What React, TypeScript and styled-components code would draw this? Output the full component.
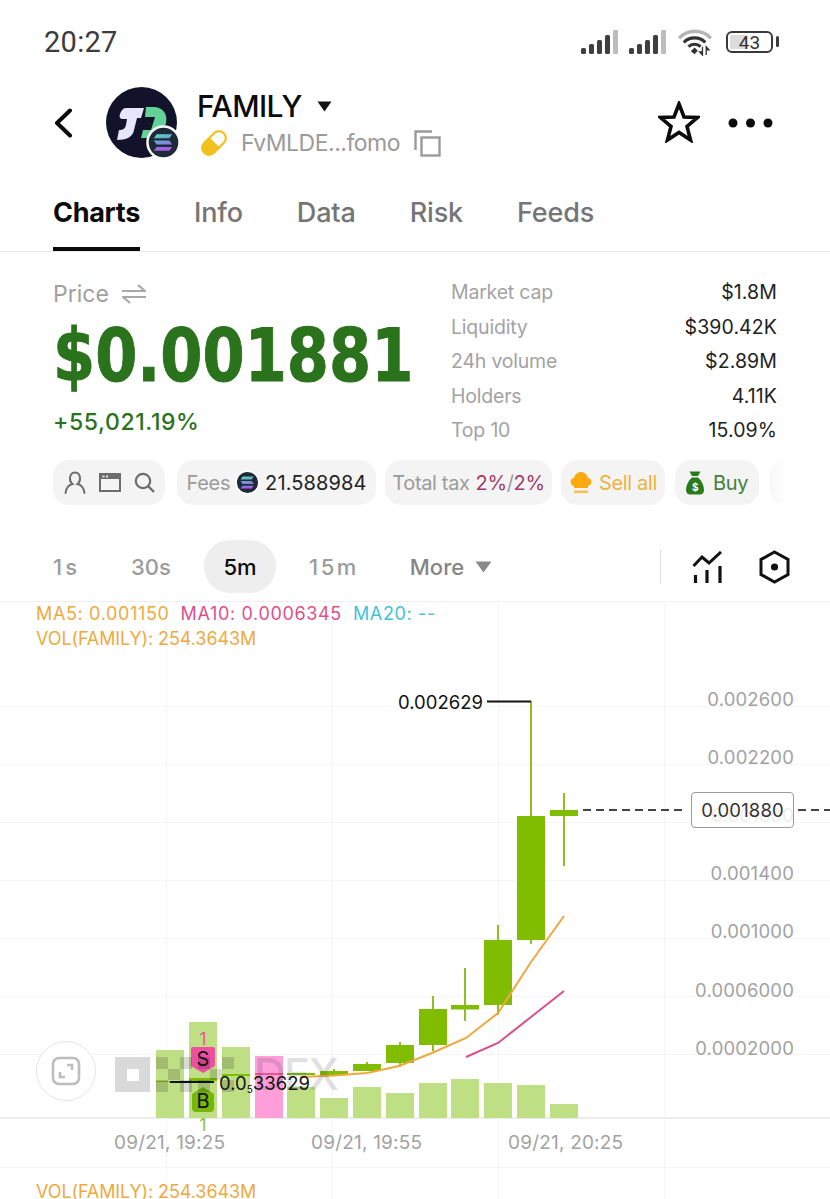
import React from "react";
import styled, { createGlobalStyle } from "styled-components";

const Global = createGlobalStyle`
  html, body { margin: 0; padding: 0; background: #fff; }
  body {
    font-family: Inter, "Liberation Sans", sans-serif;
    font-feature-settings: "tnum" 1;
  }
`;

const Page = styled.div`
  width: 830px;
  height: 1199px;
  overflow: hidden;
  display: flex;
  flex-direction: column;
  background: #fff;
`;

const StatusBar = styled.div`
  height: 84px;
  flex: none;
  display: flex;
  align-items: center;
  justify-content: space-between;
  padding: 0 57px 0 44px;
`;
const Clock = styled.span`
  font: 400 29px Roboto, sans-serif;
  color: #3c3c3c;
  letter-spacing: 0.3px;
`;
const StatusIcons = styled.div`
  display: flex;
  align-items: center;
  gap: 9px;
`;
const SignalIcons = styled.div`
  display: flex;
  gap: 9px;
  margin-right: -1px;
`;
const BatteryBox = styled.div`
  position: relative;
  width: 47px;
  height: 22px;
  margin-left: 3px;
  box-sizing: border-box;
  border: 2px solid #3a3a3a;
  border-radius: 6px;
  display: flex;
  align-items: center;
  justify-content: center;
  font: 400 19px Roboto, sans-serif;
  color: #333;
  background: linear-gradient(90deg, #dcdcdc 0 42%, #fff 42%);
  background-clip: content-box;
  padding: 2px;
  &::after {
    content: "";
    position: absolute;
    right: -8px;
    top: 3px;
    width: 3px;
    height: 11px;
    border-radius: 2px;
    background: #3a3a3a;
  }
`;

const Header = styled.div`
  height: 106px;
  flex: none;
  display: flex;
  align-items: flex-start;
  padding-top: 3px;
  box-sizing: border-box;
  position: relative;
`;
const BackSlot = styled.div`
  width: 106px;
  padding: 21px 0 0 53px;
  box-sizing: border-box;
  flex: none;
`;
const AvatarSlot = styled.div`
  position: relative;
  width: 71px;
  height: 71px;
  flex: none;
`;
const ChainBadge = styled.div`
  position: absolute;
  right: -4px;
  bottom: -2px;
  width: 35px;
  height: 35px;
  display: flex;
`;
const TitleBlock = styled.div`
  margin-left: 20px;
  flex: 1;
  display: flex;
  flex-direction: column;
`;
const TitleRow = styled.div`
  display: flex;
  align-items: center;
  gap: 15px;
  height: 38px;
`;
const Title = styled.span`
  font: 500 30px Inter, sans-serif;
  color: #0b0b0b;
  letter-spacing: -0.55px;
`;
const AddressRow = styled.div`
  display: flex;
  align-items: center;
  height: 36px;
  margin-left: 3px;
`;
const Address = styled.span`
  font: 400 23px Inter, sans-serif;
  color: #9a9a9a;
  margin-left: 13px;
  letter-spacing: -0.5px;
`;
const HeadActions = styled.div`
  display: flex;
  align-items: center;
  gap: 28px;
  padding: 14px 57px 0 0;
`;

const Tabs = styled.div`
  height: 62px;
  flex: none;
  display: flex;
  box-sizing: border-box;
  border-bottom: 1px solid #e9e9e9;
  padding-left: 53px;
  gap: 54px;
`;
const Tab = styled.div<{ $on?: boolean }>`
  height: 61px;
  box-sizing: border-box;
  padding-top: 5px;
  font: ${(p) => (p.$on ? 700 : 500)} 27px Inter, sans-serif;
  letter-spacing: ${(p) => (p.$on ? -0.3 : -0.15)}px;
  color: ${(p) => (p.$on ? "#0b0b0b" : "#757575")};
  line-height: 36px;
  border-bottom: 4px solid ${(p) => (p.$on ? "#0b0b0b" : "transparent")};
`;

const PriceSection = styled.div`
  height: 208px;
  flex: none;
  box-sizing: border-box;
  display: flex;
  padding: 23px 53px 0;
`;
const PriceCol = styled.div`
  width: 398px;
  flex: none;
  display: flex;
  flex-direction: column;
`;
const PriceLabelRow = styled.div`
  display: flex;
  align-items: center;
  gap: 13px;
  height: 37px;
  font: 400 23px Inter, sans-serif;
  color: #a0a0a0;
`;
const BigPrice = styled.div`
  font: 700 73px "DejaVu Sans", sans-serif;
  line-height: 88px;
  height: 88px;
  color: #2a721c;
  -webkit-text-stroke: 1px #2a721c;
  transform: scaleX(0.83);
  transform-origin: left center;
  white-space: nowrap;
`;
const Change = styled.div`
  font: 500 23px Inter, sans-serif;
  line-height: 44px;
  color: #2a721c;
  letter-spacing: 0.6px;
`;
const Stats = styled.div`
  flex: 1;
  display: flex;
  flex-direction: column;
`;
const StatRow = styled.div`
  height: 34.5px;
  display: flex;
  align-items: center;
  justify-content: space-between;
  font: 400 19.5px Inter, sans-serif;
  letter-spacing: -0.2px;
`;
const StatLabel = styled.span`
  color: #a3a3a3;
`;
const StatValue = styled.span`
  color: #222;
  letter-spacing: 0.1px;
`;

const PillRow = styled.div`
  height: 45px;
  flex: none;
  display: flex;
  padding-left: 53px;
`;
const Pill = styled.div<{ $w: number; $ml: number; $gap?: number; $fade?: boolean }>`
  width: ${(p) => p.$w}px;
  margin-left: ${(p) => p.$ml}px;
  flex: none;
  box-sizing: border-box;
  height: 45px;
  border-radius: 16px;
  background: ${(p) => (p.$fade ? "linear-gradient(90deg,#f7f7f7,#fff 30%)" : "#f4f4f4")};
  display: flex;
  align-items: center;
  justify-content: center;
  gap: ${(p) => p.$gap ?? 6}px;
  font: 400 20px Inter, sans-serif;
  letter-spacing: -0.35px;
  white-space: nowrap;
`;
const PillText = styled.span<{ $c: string; $ls?: number }>`
  color: ${(p) => p.$c};
  letter-spacing: ${(p) => p.$ls ?? -0.35}px;
`;

const IntervalRow = styled.div`
  margin-top: 35px;
  height: 53px;
  flex: none;
  display: flex;
  align-items: center;
  position: relative;
`;
const Interval = styled.div<{ $on?: boolean; $w: number; $ml: number; $ls?: number }>`
  width: ${(p) => p.$w}px;
  margin-left: ${(p) => p.$ml}px;
  height: 53px;
  flex: none;
  display: flex;
  align-items: center;
  justify-content: center;
  gap: 11px;
  border-radius: 26px;
  font: 500 22px Inter, sans-serif;
  letter-spacing: ${(p) => p.$ls ?? 0}px;
  color: ${(p) => (p.$on ? "#0b0b0b" : "#9b9b9b")};
  background: ${(p) => (p.$on ? "#eeeeee" : "transparent")};
`;
const MoreText = styled.span`
  color: #858585;
`;
const IntervalTools = styled.div`
  margin-left: auto;
  height: 34px;
  display: flex;
  align-items: center;
  border-left: 1px solid #dedede;
  padding: 0 40px 0 31px;
  gap: 36px;
`;

const Chart = styled.div`
  margin-top: 8px;
  flex: 1;
  position: relative;
  overflow: hidden;
`;
const ChartSvg = styled.svg`
  position: absolute;
  inset: 0;
  width: 830px;
  height: 598px;
`;
const Legend = styled.div`
  position: absolute;
  left: 36px;
  top: 0;
  font: 400 18px Inter, sans-serif;
  letter-spacing: -0.1px;
  color: #efa93f;
  line-height: 25px;
`;
const LegendLine = styled.div`
  letter-spacing: 0.65px;
`;
const LegendPart = styled.span<{ $c: string; $m?: number }>`
  color: ${(p) => p.$c};
  margin-left: ${(p) => p.$m ?? 0}px;
`;
const AxisLabel = styled.div<{ $x: number; $y: number; $ghost?: boolean }>`
  position: absolute;
  right: ${(p) => 830 - p.$x}px;
  top: ${(p) => p.$y - 601 - 12}px;
  font: 400 18.5px Inter, sans-serif;
  letter-spacing: 0.15px;
  line-height: 24px;
  color: ${(p) => (p.$ghost ? "#d8d8d8" : "#a2a2a2")};
  white-space: nowrap;
`;
const DateLabel = styled.div<{ $x: number }>`
  position: absolute;
  left: ${(p) => p.$x}px;
  top: ${1143 - 601 - 12}px;
  font: 400 19px Inter, sans-serif;
  letter-spacing: 0.2px;
  line-height: 24px;
  color: #a2a2a2;
  white-space: nowrap;
`;
const PriceBox = styled.div`
  position: absolute;
  left: 691px;
  top: ${792 - 601}px;
  width: 103px;
  height: 36px;
  box-sizing: border-box;
  border: 1px solid #9a9a9a;
  border-radius: 4px;
  background: rgba(255, 255, 255, 0.55);
  display: flex;
  align-items: center;
  justify-content: center;
  font: 400 18.5px Inter, sans-serif;
  letter-spacing: 0.15px;
  color: #333;
`;
const Callout = styled.div<{ $x: number; $y: number }>`
  position: absolute;
  left: ${(p) => p.$x}px;
  top: ${(p) => p.$y - 601 - 12}px;
  font: 400 18.5px Inter, sans-serif;
  line-height: 24px;
  color: #111;
  white-space: nowrap;
`;
const Sub = styled.span`
  font-size: 10px;
  vertical-align: -3px;
`;
const Marker = styled.div<{ $x: number; $y: number; $c: string; $size: number }>`
  position: absolute;
  left: ${(p) => p.$x}px;
  top: ${(p) => p.$y - 601}px;
  font: 400 ${(p) => p.$size}px Inter, sans-serif;
  line-height: 20px;
  width: 24px;
  text-align: center;
  color: ${(p) => p.$c};
`;
const Watermark = styled.div`
  position: absolute;
  left: 254px;
  top: ${1051 - 601}px;
  font: 500 44px Inter, sans-serif;
  line-height: 46px;
  color: rgba(60, 60, 70, 0.16);
  letter-spacing: -2px;
`;
const ExpandButton = styled.div`
  position: absolute;
  left: 36px;
  top: ${1041 - 601}px;
  width: 60px;
  height: 60px;
  box-sizing: border-box;
  border: 1px solid #e4e4e4;
  border-radius: 50%;
  background: #fff;
  display: flex;
  align-items: center;
  justify-content: center;
`;
const BottomLegend = styled.div`
  position: absolute;
  left: 36px;
  top: ${1179 - 601}px;
  font: 400 18px Inter, sans-serif;
  letter-spacing: -0.1px;
  line-height: 25px;
  color: #efa93f;
`;

const Solana = ({ id, size }: { id: string; size: number }) => (
  <svg width={size} height={size} viewBox="0 0 36 36">
    <defs>
      <linearGradient id={id} x1="0" y1="0" x2="0.3" y2="1">
        <stop offset="0" stopColor="#4fe3b8" />
        <stop offset="0.5" stopColor="#6f9bd8" />
        <stop offset="1" stopColor="#a45ce6" />
      </linearGradient>
    </defs>
    <circle cx="18" cy="18" r="16.5" fill="#1e2a38" stroke="#fff" strokeWidth="2.5" />
    <path d="M11 9.5h16l-3 4H8zM8 16h16l3 4H11zM11 22.5h16l-3 4H8z" fill={`url(#${id})`} />
  </svg>
);

const Signal = () => (
  <svg width="39" height="24" viewBox="0 0 39 24">
    <rect x="0" y="18" width="5" height="6" rx="1.5" fill="#3f3f3f" />
    <rect x="8" y="14" width="5" height="10" rx="1.5" fill="#3f3f3f" />
    <rect x="16" y="10" width="5" height="14" rx="1.5" fill="#3f3f3f" />
    <rect x="24" y="5" width="5" height="19" rx="1.5" fill="#3f3f3f" />
    <rect x="32" y="0" width="5" height="24" rx="1" fill="#bdbdbd" />
  </svg>
);

const volumes: [number, number, string][] = [
  [156, 1050, "#bfdf84"],
  [189, 1022, "#bfdf84"],
  [222, 1047, "#bfdf84"],
  [255, 1056, "#ff9ed8"],
  [287, 1087, "#bfdf84"],
  [320, 1098, "#bfdf84"],
  [353, 1087, "#bfdf84"],
  [386, 1093, "#bfdf84"],
  [419, 1083, "#bfdf84"],
  [451, 1079, "#bfdf84"],
  [484, 1083, "#bfdf84"],
  [517, 1085, "#bfdf84"],
  [550, 1104, "#bfdf84"],
];
// x, bodyTop, bodyBottom
const candles: [number, number, number][] = [
  [156, 1081, 1082],
  [189, 1078, 1081],
  [222, 1074, 1076],
  [287, 1073, 1075],
  [320, 1071, 1075],
  [353, 1064, 1071],
  [386, 1045, 1063],
  [419, 1009, 1045],
  [451, 1005, 1009.5],
  [484, 940, 1005],
  [517, 816, 940],
  [550, 810, 816],
];
const hLines = [706, 764, 822, 880, 938, 996, 1054, 1167];
const vLines = [166, 332, 498, 664];
const axis: [number, string][] = [
  [699, "0.002600"],
  [757, "0.002200"],
  [873, "0.001400"],
  [931, "0.001000"],
  [990, "0.0006000"],
  [1048, "0.0002000"],
];
const stats: [string, string][] = [
  ["Market cap", "$1.8M"],
  ["Liquidity", "$390.42K"],
  ["24h volume", "$2.89M"],
  ["Holders", "4.11K"],
  ["Top 10", "15.09%"],
];

export default function App() {
  return (
    <Page>
      <Global />
      <StatusBar>
        <Clock>20:27</Clock>
        <StatusIcons>
          <SignalIcons>
            <Signal />
            <Signal />
          </SignalIcons>
          <svg width="38" height="28" viewBox="0 0 38 30">
            <path d="M2 11 C11 1 27 1 36 11" fill="none" stroke="#b5b5b5" strokeWidth="3.6" />
            <path d="M7 15.5 C13 9 24 9 30 15.5" fill="none" stroke="#333" strokeWidth="3.4" />
            <path d="M12 20 C15.5 16.5 21.5 16.5 25 20" fill="none" stroke="#333" strokeWidth="3.2" />
            <path d="M14.5 25 L18.5 21 L22 24.5 L18.5 28 Z" fill="#333" />
            <path d="M27 20v9l-3-3.5h3M31 29v-9l3 3.5h-3" fill="#333" stroke="#333" strokeWidth="1.4" />
          </svg>
          <BatteryBox>43</BatteryBox>
        </StatusIcons>
      </StatusBar>

      <Header>
        <BackSlot>
          <svg width="20" height="30" viewBox="0 0 20 30">
            <path d="M17 2.5 L4 15 L17 27.5" fill="none" stroke="#0b0b0b" strokeWidth="4" strokeLinecap="round" strokeLinejoin="round" />
          </svg>
        </BackSlot>
        <AvatarSlot>
          <svg width="71" height="71" viewBox="0 0 71 71">
            <circle cx="35.5" cy="35.5" r="35.5" fill="#12122a" />
            <path d="M40 20 H47 C57 20 62 27 60 36 C58 46 50 51 40 51 H35 L37 43 H45 L49 30 H39 Z" fill="#62d296" />
            <path d="M20 21 H38 L35 31 H31 L28 43 C27 50 20 53 11 53 L13 43 C17 43 19 42 20 38 L21 32 H17 C14 32 13 30 14 27 C15 24 17 21 20 21 Z" fill="#e6e6fa" />
          </svg>
          <ChainBadge>
            <Solana id="sol-a" size={35} />
          </ChainBadge>
        </AvatarSlot>
        <TitleBlock>
          <TitleRow>
            <Title>FAMILY</Title>
            <svg width="15" height="11" viewBox="0 0 15 11">
              <path d="M0.5 0.5 H14.5 L7.5 10.5 Z" fill="#111" />
            </svg>
          </TitleRow>
          <AddressRow>
            <svg width="28" height="28" viewBox="0 0 28 28">
              <g transform="rotate(45 14 14)">
                <rect x="6" y="-1" width="16" height="30" rx="8" fill="#f2c11e" />
                <path d="M7.5 14 V7 a6.5 6.5 0 0 1 13 0 V14 Z" fill="#fff" stroke="#f2c11e" strokeWidth="1.5" />
              </g>
            </svg>
            <Address>FvMLDE...fomo</Address>
            <svg width="27" height="27" viewBox="0 0 27 27" style={{ marginLeft: 14 }}>
              <path d="M18 1.5 H1.5 V20" fill="none" stroke="#9a9a9a" strokeWidth="2.4" />
              <rect x="7.5" y="7.5" width="18" height="18" fill="none" stroke="#9a9a9a" strokeWidth="2.4" />
            </svg>
          </AddressRow>
        </TitleBlock>
        <HeadActions>
          <svg width="42" height="42" viewBox="0 0 42 42">
            <path d="M21 3 L26 16 L39.5 16.5 L29 25.5 L32.5 39 L21 31.5 L9.5 39 L13 25.5 L2.5 16.5 L16 16 Z" fill="none" stroke="#0b0b0b" strokeWidth="3.6" strokeLinejoin="miter" />
          </svg>
          <svg width="45" height="12" viewBox="0 0 45 12">
            <circle cx="5" cy="7" r="4.5" fill="#0b0b0b" />
            <circle cx="22.5" cy="7" r="4.5" fill="#0b0b0b" />
            <circle cx="40" cy="7" r="4.5" fill="#0b0b0b" />
          </svg>
        </HeadActions>
      </Header>

      <Tabs>
        <Tab $on>Charts</Tab>
        <Tab>Info</Tab>
        <Tab>Data</Tab>
        <Tab>Risk</Tab>
        <Tab>Feeds</Tab>
      </Tabs>

      <PriceSection>
        <PriceCol>
          <PriceLabelRow>
            Price
            <svg width="24" height="20" viewBox="0 0 24 20">
              <path d="M0 7 H23 L16 1 M24 13 H1 L8 19" fill="none" stroke="#a8a8a8" strokeWidth="2.2" />
            </svg>
          </PriceLabelRow>
          <BigPrice>$0.001881</BigPrice>
          <Change>+55,021.19%</Change>
        </PriceCol>
        <Stats>
          {stats.map(([l, v]) => (
            <StatRow key={l}>
              <StatLabel>{l}</StatLabel>
              <StatValue>{v}</StatValue>
            </StatRow>
          ))}
        </Stats>
      </PriceSection>

      <PillRow>
        <Pill $w={112} $ml={0} $gap={13}>
          <svg width="22" height="23" viewBox="0 0 22 23">
            <path d="M11 1.5 C7.5 1.5 6 4.5 6 7.5 C6 10 7 12 8.5 13 C5 14 2 17 1.5 22 M11 1.5 C14.5 1.5 16 4.5 16 7.5 C16 10 15 12 13.5 13 C17 14 20 17 20.5 22" fill="none" stroke="#6d6d6d" strokeWidth="2" strokeLinecap="round" />
          </svg>
          <svg width="22" height="19" viewBox="0 0 22 19">
            <rect x="1" y="1" width="20" height="17" fill="none" stroke="#6d6d6d" strokeWidth="2" />
            <rect x="1" y="1" width="20" height="5" fill="#6d6d6d" />
            <rect x="3.5" y="2.6" width="2" height="1.8" fill="#f4f4f4" />
            <rect x="7" y="2.6" width="2" height="1.8" fill="#f4f4f4" />
          </svg>
          <svg width="21" height="21" viewBox="0 0 21 21">
            <circle cx="9" cy="9" r="7.2" fill="none" stroke="#6d6d6d" strokeWidth="2.2" />
            <path d="M14 14 L20 20" stroke="#6d6d6d" strokeWidth="2.4" />
          </svg>
        </Pill>
        <Pill $w={199} $ml={12} $gap={5}>
          <PillText $c="#9b9b9b">Fees</PillText>
          <Solana id="sol-b" size={25} />
          <PillText $c="#222" $ls={0.1}>21.588984</PillText>
        </Pill>
        <Pill $w={167} $ml={9}>
          <PillText $c="#9b9b9b">Total tax</PillText>
          <span>
            <PillText $c="#a53c68">2%</PillText>
            <PillText $c="#9b9b9b">/</PillText>
            <PillText $c="#a53c68">2%</PillText>
          </span>
        </Pill>
        <Pill $w={104} $ml={9}>
          <svg width="24" height="24" viewBox="0 0 24 24">
            <path d="M5 15 C1 14 0 8 5 7 C6 3 9 1 12 1 C15 1 18 3 19 7 C24 8 23 14 19 15 L19 17 H5 Z" fill="#ffa90f" />
            <rect x="5" y="19.5" width="14" height="2.6" fill="#f6c05a" />
          </svg>
          <PillText $c="#f0b23c">Sell all</PillText>
        </Pill>
        <Pill $w={84} $ml={10} $gap={9}>
          <svg width="18" height="24" viewBox="0 0 18 24">
            <path d="M3.5 0.5 H14.5 L12 5 H6 Z" fill="#2a7a1c" />
            <path d="M6 6.5 H12 C16 10 18 15 18 19 C18 22 16 23.5 14 23.5 H4 C2 23.5 0 22 0 19 C0 15 2 10 6 6.5 Z" fill="#2a7a1c" />
            <text x="9" y="20" textAnchor="middle" fontSize="10" fontWeight="700" fontFamily="Inter, sans-serif" fill="#fff">$</text>
          </svg>
          <PillText $c="#44803a">Buy</PillText>
        </Pill>
        <Pill $w={60} $ml={11} $fade />
      </PillRow>

      <IntervalRow>
        <Interval $w={63} $ml={35} $ls={3}>1s</Interval>
        <Interval $w={72} $ml={17}>30s</Interval>
        <Interval $on $w={72} $ml={17}>5m</Interval>
        <Interval $w={72} $ml={22} $ls={2.5}>15m</Interval>
        <Interval $w={90} $ml={36}>
          <MoreText>More</MoreText>
          <svg width="17" height="12" viewBox="0 0 17 12">
            <path d="M0.5 0.5 H16.5 L8.5 11.5 Z" fill="#8a8a8a" />
          </svg>
        </Interval>
        <IntervalTools>
          <svg width="31" height="32" viewBox="0 0 31 32">
            <path d="M1.5 15 L10 6 L17 12 L29 1" fill="none" stroke="#111" strokeWidth="3" />
            <path d="M3.5 24 V32 M15 19 V32 M28 15 V32" stroke="#111" strokeWidth="3.2" />
          </svg>
          <svg width="31" height="34" viewBox="0 0 31 34">
            <path d="M15.5 2 L29 9.5 V24.5 L15.5 32 L2 24.5 V9.5 Z" fill="none" stroke="#111" strokeWidth="3" />
            <circle cx="15.5" cy="17" r="3.6" fill="#111" />
          </svg>
        </IntervalTools>
      </IntervalRow>

      <Chart>
        <ChartSvg viewBox="0 601 830 598">
          <line x1="0" y1="601.5" x2="830" y2="601.5" stroke="#efefef" />
          {hLines.map((y) => (
            <line key={y} x1="0" y1={y + 0.5} x2="830" y2={y + 0.5} stroke="#f5f5f5" />
          ))}
          <line x1="0" y1="1118" x2="830" y2="1118" stroke="#e6e6e6" strokeWidth="1.5" />
          {vLines.map((x) => (
            <line key={x} x1={x + 0.5} y1="601" x2={x + 0.5} y2="1199" stroke="#f5f5f5" />
          ))}
          {volumes.map(([x, top, c]) => (
            <rect key={x} x={x} y={top} width="28" height={1118 - top} fill={c} />
          ))}
          <rect x="255" y="1073" width="28" height="2" fill="#e9558f" />
          <path d="M531 701 V944 M564 793 V866 M498 925 V1015 M465 968 V1021 M433 996 V1051 M400 1042 V1067 M367 1062 V1071 M334 1069 V1075" stroke="#8cc11f" strokeWidth="2" fill="none" />
          {candles.map(([x, a, b]) => (
            <rect key={x} x={x} y={a} width="28" height={b - a} fill="#80bd00" />
          ))}
          <path d="M300 1077 L334 1075.5 L367 1073 L399 1066 L432 1053 L466 1038 L498 1013 L531 962 L564 916" fill="none" stroke="#f0a83c" strokeWidth="2" />
          <path d="M466 1057 L498 1043 L531 1017 L564 991" fill="none" stroke="#d94f8c" strokeWidth="2" />
          <path d="M487 701.5 H531" stroke="#111" strokeWidth="2" />
          <path d="M170 1082 H214" stroke="#111" strokeWidth="2" />
          <path d="M583 810 H686 M798 810 H830" stroke="#444" strokeWidth="2" strokeDasharray="8 5" />
          <path d="M191 1049 Q191 1047 193 1047 H213 Q215 1047 215 1049 V1066 L203 1073 L191 1066 Z" fill="#ef4fa3" />
          <path d="M203 1087 L214 1094 V1108 Q214 1112 210 1112 H196 Q192 1112 192 1108 V1094 Z" fill="#74b70a" />
          <g fill="#000" fillOpacity="0.15">
            <path d="M115 1057 H150 V1092 H115 Z M127 1069 V1081 H139 V1069 Z" fillRule="evenodd" />
            <rect x="156" y="1057" width="12" height="12" />
            <rect x="156" y="1080" width="12" height="12" />
            <rect x="168" y="1069" width="12" height="11" />
            <rect x="180" y="1057" width="12" height="12" />
            <rect x="180" y="1080" width="12" height="12" />
            <rect x="198" y="1057" width="12" height="12" />
            <rect x="198" y="1080" width="12" height="12" />
            <rect x="210" y="1069" width="12" height="11" />
            <rect x="222" y="1057" width="12" height="12" />
            <rect x="222" y="1080" width="12" height="12" />
          </g>
        </ChartSvg>
        <Watermark>DEX</Watermark>
        <Legend>
          <LegendLine>
            MA5: 0.001150
            <LegendPart $c="#df4f8c" $m={11}>MA10: 0.0006345</LegendPart>
            <LegendPart $c="#3ec3d6" $m={11}>MA20: --</LegendPart>
          </LegendLine>
          <div>VOL(FAMILY): 254.3643M</div>
        </Legend>
        {axis.map(([y, t]) => (
          <AxisLabel key={t} $x={794} $y={y}>{t}</AxisLabel>
        ))}
        <AxisLabel $x={794} $y={815} $ghost>0.001800</AxisLabel>
        <PriceBox>0.001880</PriceBox>
        <Callout $x={398} $y={702}>0.002629</Callout>
        <Callout $x={219} $y={1083}>0.0<Sub>5</Sub>33629</Callout>
        <Marker $x={191} $y={1029} $c="#e8559b" $size={17}>1</Marker>
        <Marker $x={191} $y={1049} $c="#111" $size={20}>S</Marker>
        <Marker $x={191} $y={1091} $c="#111" $size={20}>B</Marker>
        <Marker $x={191} $y={1115} $c="#8cc11f" $size={17}>1</Marker>
        <ExpandButton>
          <svg width="30" height="30" viewBox="0 0 30 30">
            <rect x="2" y="2" width="26" height="26" rx="6" fill="none" stroke="#bdbdbd" strokeWidth="2.6" />
            <path d="M16 9 H21 V14 M9 16 V21 H14" fill="none" stroke="#bdbdbd" strokeWidth="2.6" />
          </svg>
        </ExpandButton>
        <DateLabel $x={114}>09/21, 19:25</DateLabel>
        <DateLabel $x={311}>09/21, 19:55</DateLabel>
        <DateLabel $x={508}>09/21, 20:25</DateLabel>
        <BottomLegend>VOL(FAMILY): 254.3643M</BottomLegend>
      </Chart>
    </Page>
  );
}
